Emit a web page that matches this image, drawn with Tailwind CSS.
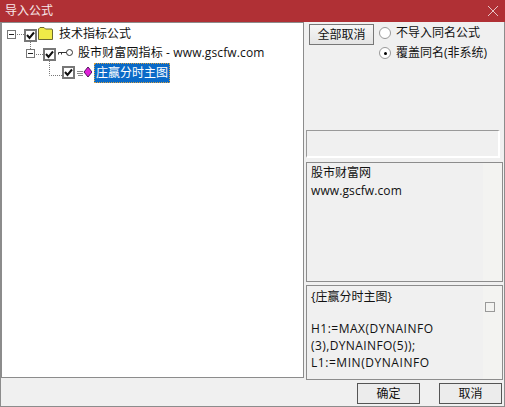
<!DOCTYPE html>
<html lang="zh-CN">
<head>
<meta charset="UTF-8">
<title>导入公式</title>
<script src="https://cdn.jsdelivr.net/npm/@tailwindcss/browser@4"></script>
</head>
<body class="w-[505px] h-[407px] overflow-hidden bg-[#f0f0f0] font-['Open_Sans','Noto_Sans_CJK_SC',sans-serif] text-[12px] text-[#111]">
<div class="flex flex-col h-[407px] border-x border-b border-[#8c8c8c]">
  <!-- title bar -->
  <div class="flex items-center justify-between h-[22px] -mx-px bg-[#b03035] pl-[5px] pr-[7px] text-white/90 shrink-0">
    <span class="text-[12px] leading-[22px]">导入公式</span>
    <svg class="w-[10px] h-[10px]" viewBox="0 0 10 10" fill="none" stroke="#e6c4c6" stroke-width="1"><path d="M0 0 10 10M10 0 0 10"/></svg>
  </div>
  <div class="flex h-[356px] shrink-0">
    <!-- tree -->
    <div class="relative w-[303px] h-[356px] bg-white border border-[#8c8c8c] shrink-0">
      <svg class="absolute left-0 top-0" width="110" height="70" fill="none" stroke="#777" stroke-width="1" stroke-dasharray="1 1">
        <path d="M15 11.500H22M28.500 19V26M34 31.500H41M47.500 38V52.500H60"/>
      </svg>
      <div class="relative flex items-center h-[19px] mt-[2px] pl-[5px]">
        <span class="flex items-center justify-center w-[9px] h-[9px] border border-[#777] bg-white"><span class="w-[5px] h-px bg-[#222]"></span></span>
        <span class="ml-[8px] flex items-center justify-center w-[13px] h-[13px] border-2 border-[#777] bg-white mt-[2px]"><svg width="9" height="9" viewBox="0 0 9 9" fill="none" stroke="#111" stroke-width="2"><path d="M1 4 3.500 7 8 1.500"/></svg></span>
        <svg class="ml-[1px] -mt-[3px]" width="15" height="13" viewBox="0 0 15 13"><path d="M.5 12.500V2L2 .5H6L7.500 2H14L14.500 3V12.500Z" fill="#f0ea48" stroke="#6e6a30"/></svg>
        <span class="ml-[6px] -mt-[2px]">技术指标公式</span>
      </div>
      <div class="relative flex items-center h-[19px] pl-[24px]">
        <span class="flex items-center justify-center w-[9px] h-[9px] border border-[#777] bg-white"><span class="w-[5px] h-px bg-[#222]"></span></span>
        <span class="ml-[8px] flex items-center justify-center w-[13px] h-[13px] border-2 border-[#777] bg-white mt-[2px]"><svg width="9" height="9" viewBox="0 0 9 9" fill="none" stroke="#111" stroke-width="2"><path d="M1 4 3.500 7 8 1.500"/></svg></span>
        <svg class="ml-[2px] -mt-[2px]" width="15" height="9" viewBox="0 0 15 9" fill="none" stroke="#333"><circle cx="11.500" cy="4.500" r="3"/><path d="M8.500 4.500H.5V6.500M3.500 4.500V6.500"/></svg>
        <span class="ml-[5px] -mt-[2px] whitespace-nowrap tracking-[0.12px]">股市财富网指标 - www.gscfw.com</span>
      </div>
      <div class="relative flex items-center h-[19px] pl-[60px]">
        <span class="flex items-center justify-center w-[13px] h-[13px] border-2 border-[#777] bg-white"><svg width="9" height="9" viewBox="0 0 9 9" fill="none" stroke="#111" stroke-width="2"><path d="M1 4 3.500 7 8 1.500"/></svg></span>
        <svg class="ml-[2px]" width="15" height="11" viewBox="0 0 15 11"><path d="M0 4.500H6M0 6.500H6M1 8.500H6" stroke="#888" stroke-width="1"/><path d="M11 0 15 5 11 10 7 5Z" fill="#e020d8" stroke="#52125a" stroke-width="1"/></svg>
        <span class="ml-[2px] w-[76px] h-[20px] text-center leading-[18px] bg-[#0a6ac8] text-white border border-dotted border-[#d8a040]">庄赢分时主图</span>
      </div>
    </div>
    <!-- right column -->
    <div class="flex flex-col flex-1 min-w-0 pl-[2px] pr-[1px]">
      <div class="flex h-[108px] pt-[2px] shrink-0">
        <button class="w-[65px] h-[21px] ml-[3px] border border-[#777] bg-gradient-to-b from-[#f6f6f6] to-[#e4e4e4] leading-[18px] text-[12px] shrink-0">全部取消</button>
        <div class="flex flex-col ml-[5px]">
          <label class="flex items-center h-[20px] -mt-px"><span class="w-[12px] h-[12px] rounded-full border border-[#999] bg-white"></span><span class="ml-[5px]">不导入同名公式</span></label>
          <label class="flex items-center h-[20px]"><span class="flex items-center justify-center w-[12px] h-[12px] rounded-full border border-[#999] bg-white"><span class="w-[3px] h-[3px] rounded-full bg-black"></span></span><span class="ml-[5px] whitespace-nowrap">覆盖同名(非系统)</span></label>
        </div>
      </div>
      <div class="h-[28px] w-[194px] shrink-0 border-t border-l border-[#999] border-b-2 border-r-2 border-b-white border-r-white bg-[#f0f0f0]"></div>
      <div class="relative h-[120px] w-[197px] mt-[4px] shrink-0 border border-[#8c8c8c] bg-[#f0f0f0] px-[4px] pt-[1px] leading-[18px]">
        <div class="absolute right-0 inset-y-0 w-[19px] bg-[#f3f3f1]"></div>
        <p>股市财富网</p>
        <p class="tracking-[0.1px]">www.gscfw.com</p>
      </div>
      <div class="relative h-[95px] w-[197px] mt-[3px] shrink-0 border border-[#8c8c8c] bg-[#f0f0f0] px-[4px] pt-[2px] leading-[17px]">
        <div class="absolute right-0 inset-y-0 w-[19px] bg-[#f3f3f1]"></div>
        <p class="relative">{庄赢分时主图}</p>
        <p class="h-[15px]"></p>
        <p class="relative tracking-[0.5px]">H1:=MAX(DYNAINFO</p>
        <p class="relative tracking-[0.4px]">(3),DYNAINFO(5));</p>
        <p class="relative tracking-[0.55px]">L1:=MIN(DYNAINFO</p>
        <span class="absolute left-[178px] top-[16px] w-[10px] h-[10px] border border-[#999]"></span>
      </div>
    </div>
  </div>
  <!-- footer buttons -->
  <div class="flex justify-end gap-[19px] pt-[5px] pr-[2px]">
    <button class="w-[63px] h-[21px] border border-[#555] bg-[#ececec] leading-[18px]">确定</button>
    <button class="w-[63px] h-[21px] border border-[#555] bg-[#ececec] leading-[18px]">取消</button>
  </div>
</div>
</body>
</html>
